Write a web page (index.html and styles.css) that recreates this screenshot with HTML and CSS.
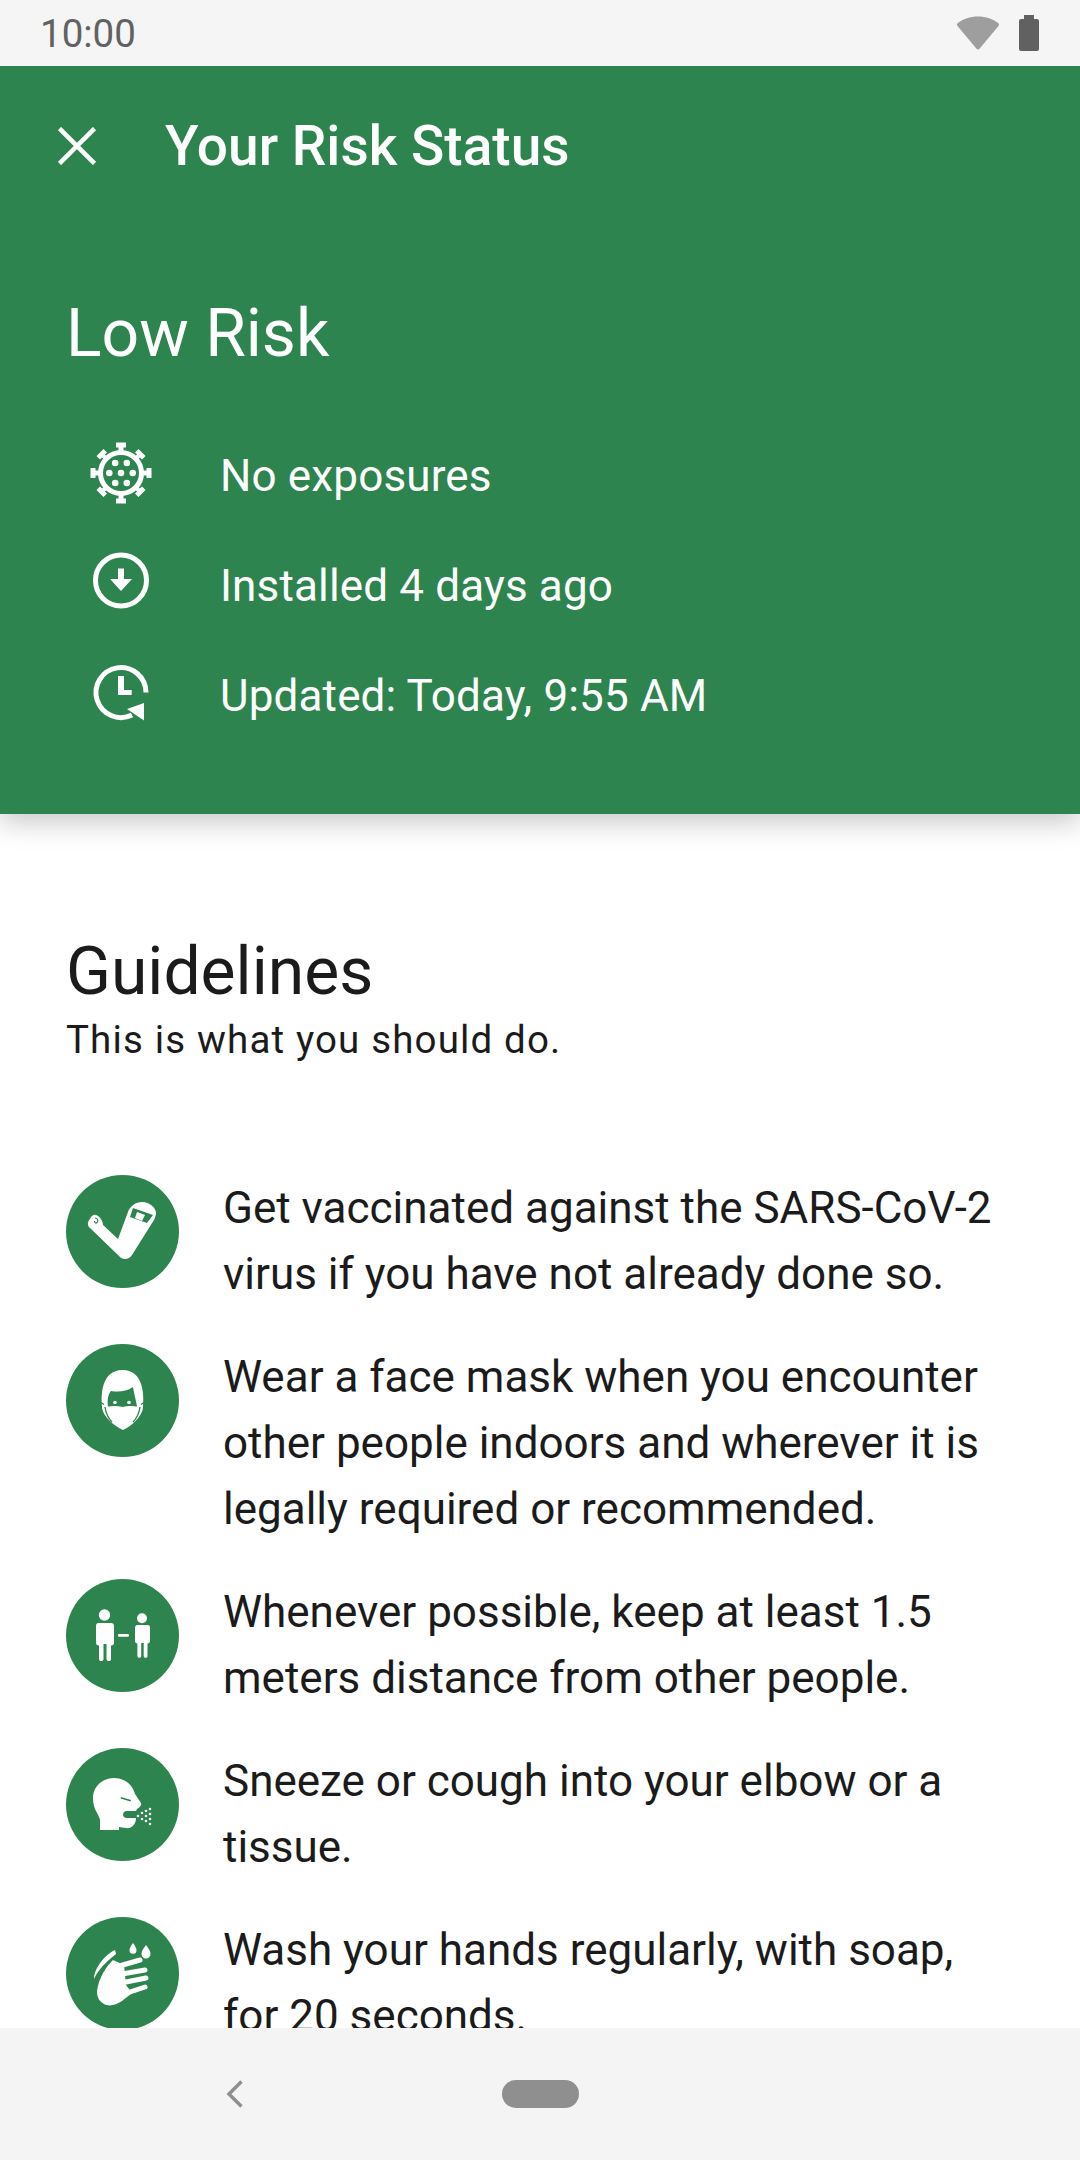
FILE: index.html
```html
<!DOCTYPE html>
<html lang="en">
<head>
    <meta charset="UTF-8">
    <meta name="viewport" content="width=device-width, initial-scale=1.0">
    <title>Your Risk Status</title>
    <link rel="stylesheet" href="styles.css">
</head>
<body>
    <div class="screen">
        <div class="status-bar">
            <span class="clock">10:00</span>
            <div class="status-icons">
                <svg class="wifi" viewBox="0 0 44 34"><path d="M22 33.500C21.300 33.500 20.800 33 20.300 32.400L1.500 10C.6 8.900.7 7.900 1.800 7.100 7 3 14 .5 22 .5s15 2.500 20.200 6.600C43.300 7.900 43.400 8.900 42.500 10L23.700 32.400C23.200 33 22.700 33.500 22 33.500z" fill="#9e9e9e"/></svg>
                <svg class="battery" viewBox="0 0 20 36"><path d="M5 0h10v4h3a2 2 0 0 1 2 2v28a2 2 0 0 1-2 2H2a2 2 0 0 1-2-2V6a2 2 0 0 1 2-2h3z" fill="#616161"/></svg>
            </div>
        </div>

        <div class="content">
            <header class="risk-header">
                <div class="toolbar">
                    <svg class="close-icon" viewBox="0 0 38 38"><path d="M1.500 1.500l35 35M36.500 1.500l-35 35" stroke="#fff" stroke-width="4.500" fill="none"/></svg>
                    <h1>Your Risk Status</h1>
                </div>
                <h2 class="risk-level">Low Risk</h2>
                <ul class="risk-facts">
                    <li>
                        <svg class="fact-icon" viewBox="0 0 64 64" fill="#fff">
                            <g transform="translate(0 -2)">
                                <circle cx="32" cy="32" r="20.500" fill="none" stroke="#fff" stroke-width="5"/>
                                <path d="M29.500 10V6.500H27v-5h10v5h-2.500V10zM29.500 54v3.500H27v5h10v-5h-2.500V54zM10 29.500H6.500V27h-5v10h5v-2.500H10zM54 29.500h3.500V27h5v10h-5v-2.500H54z"/>
                                <path d="M16.500 20l-3.500-3.500-2 2-3.500-3.500 7-7 3.500 3.500-2 2 3.500 3.500zM47.500 20l3.500-3.500 2 2 3.500-3.500-7-7-3.500 3.500 2 2-3.500 3.500zM16.500 44l-3.500 3.500-2-2-3.500 3.500 7 7 3.500-3.500-2-2 3.500-3.500zM47.500 44l3.500 3.500 2-2 3.500 3.500-7 7-3.500-3.500 2-2-3.500-3.500z"/>
                                <circle cx="26.200" cy="22" r="3.300"/><circle cx="37.800" cy="22" r="3.300"/>
                                <circle cx="20.300" cy="32" r="3.300"/><circle cx="32" cy="32" r="3.300"/><circle cx="43.700" cy="32" r="3.300"/>
                                <circle cx="26.200" cy="42" r="3.300"/><circle cx="37.800" cy="42" r="3.300"/>
                            </g>
                        </svg>
                        <span>No exposures</span>
                    </li>
                    <li>
                        <svg class="fact-icon" viewBox="0 0 64 64" fill="#fff">
                            <circle cx="32" cy="27.400" r="25.500" fill="none" stroke="#fff" stroke-width="5"/>
                            <path d="M29 15.600h6V26h8L32 38 21 26h8z"/>
                        </svg>
                        <span>Installed 4 days ago</span>
                    </li>
                    <li>
                        <svg class="fact-icon" viewBox="0 0 64 64" fill="#fff">
                            <path d="M57 29.400A25 25 0 1 0 43 52" fill="none" stroke="#fff" stroke-width="5"/>
                            <path d="M29 13h6v14h7.700v5H29zM55 40 38 46l17 11.500z"/>
                        </svg>
                        <span>Updated: Today, 9:55 AM</span>
                    </li>
                </ul>
            </header>

            <section class="guidelines">
                <h2>Guidelines</h2>
                <p class="subtitle">This is what you should do.</p>
                <ul class="guideline-list">
                    <li>
                        <div class="badge">
                            <svg viewBox="0 0 113 113" fill="#fff">
                                <path d="M37 50 52 64 62 37C64 31 70 27 76 27C84 27 90 33 90 38C90 40 89 43 88 45L66 80C63 85 56 85 53 81L23 52Z"/>
                                <path d="M23 52C21 49 22 46 24 44C25 41 28 39 30 40C33 41 37 45 37 50L30 55Z"/>
                                <path d="M29 43c2 0 3.500 2 2.500 4s-3 1-3-1" stroke="#2e844e" stroke-width="1.200" fill="none"/>
                                <path d="M67 33l20 7-6 8-17-6z" fill="#2e844e"/>
                                <path d="M71 37l8 3-3 6-7-3z"/>
                            </svg>
                        </div>
                        <p>Get vaccinated against the SARS-CoV-2 virus if you have not already done so.</p>
                    </li>
                    <li>
                        <div class="badge">
                            <svg viewBox="0 0 113 113" fill="#fff">
                                <path d="M36 62C35 52 35 26 56.500 26C78 26 78 52 77 62V64C76 72 66 82 57 86C48 82 37 72 36 64Z"/>
                                <path d="M42 62.500C41 57 42 50 45 47C52 48 60 48 67 43C68 50 70 56 71 62.500C66 61.500 61 62 57 63C52 62 47 61.500 42 62.500Z" fill="#2e844e"/>
                                <circle cx="49" cy="58.500" r="1.800"/><circle cx="63" cy="58.500" r="1.800"/>
                                <path d="M35 58.500 38 60.500M78 58.500 75 60.500M39 63C40 70 43 75 46 78M74 63C73 70 70 75 67 78" stroke="#2e844e" stroke-width="1.300" fill="none"/>
                            </svg>
                        </div>
                        <p>Wear a face mask when you encounter other people indoors and wherever it is legally required or recommended.</p>
                    </li>
                    <li>
                        <div class="badge">
                            <svg viewBox="0 0 113 113" fill="#fff">
                                <circle cx="38.500" cy="36" r="5.700"/>
                                <path d="M32 44h13c2 0 3 1 3 3v17c0 1.500-1 2.500-3 2.500V80c0 1.500-.8 2-2 2s-2.500-.5-2.500-2V65h-3v15c0 1.500-1 2-2.300 2s-2.200-.5-2.200-2V66.500c-2 0-3-1-3-2.500V47c0-2 1-3 2.500-3z"/>
                                <rect x="52" y="55" width="11" height="2.800" rx="1"/>
                                <circle cx="76" cy="39.300" r="5"/>
                                <path d="M70.500 46h11c2 0 2.500 1 2.500 3v13c0 1.500-1 2.500-2.500 2.500V77c0 1.200-.8 1.800-1.800 1.800s-2-.5-2-1.800V64h-2.500v13c0 1.200-1 1.800-2 1.800s-1.800-.5-1.800-1.800V64.500c-1.500 0-2.400-1-2.400-2.500V49c0-2 1-3 2.500-3z"/>
                            </svg>
                        </div>
                        <p>Whenever possible, keep at least 1.5 meters distance from other people.</p>
                    </li>
                    <li>
                        <div class="badge">
                            <svg viewBox="0 0 113 113" fill="#fff">
                                <path d="M34 82V72C33 66 27 62 27 50C27 38 37 30 48 30C60 30 67 38 69 46L75 55C76 57 74 59 71 61L70 63H61C58 63 57 65 57 67C57 69 59 70 61 70H70C70 76 66 81 60 80C57 80 55 79 53 79V82Z"/>
                                <path d="M55 49l10 3-.5 1.500-10-3z" fill="#2e844e"/>
                                <circle cx="72" cy="68" r="1.300"/><circle cx="76" cy="65" r="1.300"/><circle cx="80" cy="63" r="1.300"/><circle cx="84" cy="61" r="1.300"/>
                                <circle cx="76" cy="71" r="1.300"/><circle cx="80" cy="68" r="1.300"/><circle cx="84" cy="66" r="1.300"/>
                                <circle cx="80" cy="73" r="1.300"/><circle cx="84" cy="71" r="1.300"/><circle cx="84" cy="76" r="1.300"/>
                            </svg>
                        </div>
                        <p>Sneeze or cough into your elbow or a tissue.</p>
                    </li>
                    <li>
                        <div class="badge">
                            <svg viewBox="0 0 113 113" fill="#fff">
                                <path d="M67 26c2.500 3.500 3.500 5.500 3.500 7.200a3.500 3.500 0 0 1-7 0c0-1.700 1-3.700 3.500-7.200zM80 28c3 4 4.500 6.500 4.500 9a4.500 4.500 0 0 1-9 0c0-2.500 1.500-5 4.500-9z"/>
                                <path d="M28 62C28 52 38 38 49 33L50 37C48 39 46 40 44 42C37 48 31 55 28 62Z"/>
                                <path d="M31 74C33 60 40 50 47 43L58 48L60 68L66 76L56 84C50 88 43 90 38 87C33 84 31 80 31 74Z"/>
                                <path d="M50 50 74 43M56 57 79 53M60 65 80 61M64 75 79 70" stroke="#fff" stroke-width="5" stroke-linecap="round" fill="none"/>
                            </svg>
                        </div>
                        <p>Wash your hands regularly, with soap, for 20 seconds.</p>
                    </li>
                </ul>
            </section>
        </div>

        <div class="nav-bar">
            <svg class="back" viewBox="0 0 18 28"><path d="M15.500 1.500 3 14l12.500 12.500" stroke="#8f8f8f" stroke-width="3.500" fill="none"/></svg>
            <div class="home-pill"></div>
        </div>
    </div>
</body>
</html>
```

FILE: styles.css
```css
html, body {
    margin: 0;
    padding: 0;
}
body {
    font-family: Roboto, 'Noto Sans', sans-serif;
    background: white;
    color: #1b1b1b;
}
h1, h2, p, ul {
    margin: 0;
    padding: 0;
}
ul {
    list-style: none;
}
.screen {
    width: 1080px;
    height: 2160px;
    display: flex;
    flex-direction: column;
    overflow: hidden;
}
.status-bar {
    height: 66px;
    flex: none;
    background: #f5f5f5;
    display: flex;
    align-items: center;
    justify-content: space-between;
    padding: 0 41px 0 40px;
}
.clock {
    font-size: 38.5px;
    font-weight: 400;
    color: #616161;
}
.status-icons {
    display: flex;
    align-items: center;
    gap: 19px;
}
.wifi {
    width: 44px;
    height: 34px;
}
.battery {
    width: 20px;
    height: 36px;
}
.content {
    flex: 1;
    min-height: 0;
    overflow: hidden;
}
.risk-header {
    height: 748px;
    box-sizing: border-box;
    background: #2e844e;
    color: white;
    box-shadow: 0 8px 26px rgba(0,0,0,0.22);
    position: relative;
}
.toolbar {
    height: 160px;
    display: flex;
    align-items: center;
    padding-left: 58px;
}
.close-icon {
    width: 38px;
    height: 38px;
    margin-right: 69px;
}
.toolbar h1 {
    font-size: 55px;
    font-weight: 500;
}
.risk-level {
    font-size: 66px;
    font-weight: 400;
    line-height: 84px;
    padding: 66px 0 0 66px;
}
.risk-facts {
    margin-top: 44px;
    padding-left: 89px;
}
.risk-facts li {
    height: 110px;
    display: flex;
    align-items: center;
    font-size: 44px;
    letter-spacing: 0.15px;
}
.risk-facts span {
    padding-top: 2px;
}
.fact-icon {
    width: 64px;
    height: 64px;
    margin-right: 67px;
    flex: none;
    overflow: visible;
}
.guidelines {
    padding: 116px 66px 0;
}
.guidelines h2 {
    font-size: 66px;
    font-weight: 400;
    line-height: 84px;
}
.subtitle {
    font-size: 38.5px;
    line-height: 52px;
    letter-spacing: 1.15px;
}
.guideline-list {
    margin-top: 109px;
    display: flex;
    flex-direction: column;
    gap: 37px;
}
.guideline-list li {
    display: flex;
    gap: 44px;
}
.guideline-list p {
    font-size: 44px;
    line-height: 66px;
}
.badge {
    width: 113px;
    height: 113px;
    flex: none;
    border-radius: 50%;
    background: #2e844e;
}
.badge svg {
    width: 113px;
    height: 113px;
    display: block;
}
.nav-bar {
    height: 132px;
    flex: none;
    background: #f4f4f4;
    position: relative;
    z-index: 2;
    display: flex;
    align-items: center;
    padding: 0 0 0 226px;
}
.back {
    width: 18px;
    height: 28px;
}
.home-pill {
    width: 77px;
    height: 28px;
    margin-left: 258px;
    border-radius: 14px;
    background: #8f8f8f;
}
```
